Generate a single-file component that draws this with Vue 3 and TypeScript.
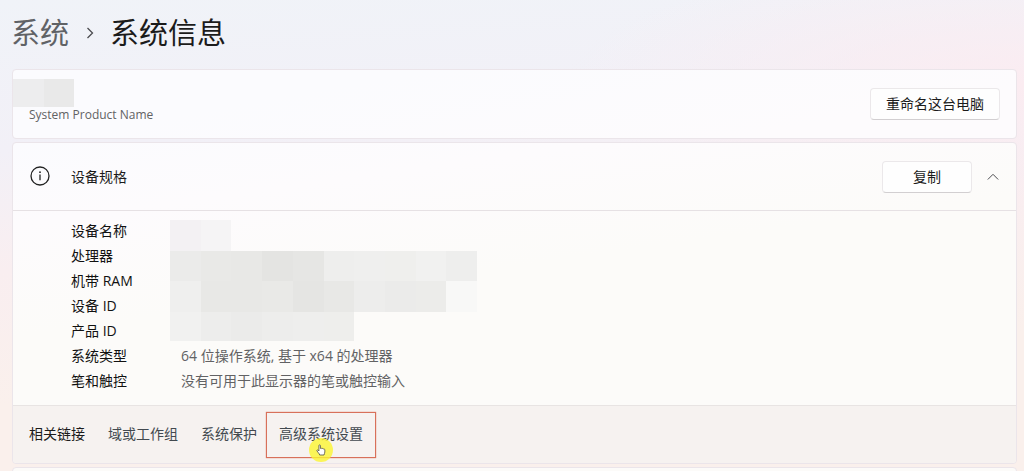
<script setup lang="ts">
interface Spec {
  label: string
  value: string
}

interface Link {
  text: string
  active: boolean
}

const specs: Spec[] = [
  { label: '设备名称', value: '' },
  { label: '处理器', value: '' },
  { label: '机带 RAM', value: '' },
  { label: '设备 ID', value: '' },
  { label: '产品 ID', value: '' },
  { label: '系统类型', value: '64 位操作系统, 基于 x64 的处理器' },
  { label: '笔和触控', value: '没有可用于此显示器的笔或触控输入' },
]

const links: Link[] = [
  { text: '域或工作组', active: false },
  { text: '系统保护', active: false },
  { text: '高级系统设置', active: true },
]

// Shades of the blocks that hide the private values, row by row
const mosaic: string[][] = [
  ['#f3f1f3', '#f5f4f5', '', '', '', '', '', '', '', ''],
  ['#ebebea', '#e9e9e7', '#e8e8e6', '#e4e4e2', '#e6e6e4', '#eeeeed', '#efefee', '#efefed', '#f1f1f0', '#eeeeed'],
  ['#efefee', '#e8e8e6', '#e8e8e6', '#e9e9e7', '#e5e5e3', '#e8e8e6', '#ededec', '#ebebea', '#ececea', '#f8f8f7'],
  ['#f1f1f0', '#ededec', '#ebebea', '#ededec', '#eeeeed', '#eeeeec', '', '', '', ''],
]
</script>

<template>
  <main class="page">
    <nav class="crumbs" aria-label="导航路径">
      <a class="crumb" href="#">系统</a>
      <svg class="crumb-arrow" viewBox="0 0 8 12" aria-hidden="true">
        <path d="M1.5 1 L6.5 6 L1.5 11" />
      </svg>
      <h1 class="title">系统信息</h1>
    </nav>

    <section class="card device">
      <div class="device-text">
        <div class="name-mask"><i></i><i></i></div>
        <p class="product">System Product Name</p>
      </div>
      <button class="btn" type="button">重命名这台电脑</button>
    </section>

    <section class="card main">
      <header class="card-head">
        <svg class="info" viewBox="0 0 20 20" aria-hidden="true">
          <circle class="ring" cx="10" cy="9" r="9" />
          <circle class="dot" cx="10" cy="5.2" r="0.9" />
          <path class="stem" d="M10 7.6 V13.2" />
        </svg>
        <h2 class="head-title">设备规格</h2>
        <button class="btn copy" type="button">复制</button>
        <button class="toggle" type="button" aria-label="折叠" aria-expanded="true">
          <svg viewBox="0 0 12 8" aria-hidden="true"><path d="M0.8 6.5 L6 1.3 L11.2 6.5" /></svg>
        </button>
      </header>

      <div class="specs">
        <dl class="spec-list">
          <div v-for="s in specs" :key="s.label" class="spec">
            <dt>{{ s.label }}</dt>
            <dd>{{ s.value }}</dd>
          </div>
        </dl>
        <div class="mosaic" aria-hidden="true">
          <template v-for="(row, r) in mosaic" :key="r">
            <i v-for="(c, i) in row" :key="i" :style="{ background: c || 'transparent' }"></i>
          </template>
        </div>
      </div>

      <footer class="links">
        <span class="links-label">相关链接</span>
        <a v-for="l in links" :key="l.text" href="#" class="link" :class="{ active: l.active }">
          {{ l.text }}
          <span v-if="l.active" class="pointer" aria-hidden="true">
            <svg viewBox="0 0 12 14">
              <path
                d="M3.5 8.2 V1.8 C3.5 .5 5.3 .5 5.3 1.8 V5.2 C5.7 4.6 6.9 4.7 7.1 5.5 C7.6 4.9 8.7 5.1 8.9 5.9 C9.5 5.5 10.6 5.8 10.6 6.9 V9.4 C10.6 10.8 9.8 11.3 9.6 13 H4.4 C4.2 11.3 2.4 10.2 1.2 8.1 C.7 7.1 2 6.4 2.7 7.2 Z"
              />
            </svg>
          </span>
        </a>
      </footer>
    </section>

    <section class="card next"></section>
  </main>
</template>

<style>
body {
  margin: 0;
}
</style>

<style scoped>
.page {
  box-sizing: border-box;
  height: 100vh;
  overflow: hidden;
  display: flex;
  flex-direction: column;
  gap: 3px;
  padding: 0 7px 0 12px;
  background:
    radial-gradient(ellipse 45% 28% at 100% 18%, #fbecf1 0%, rgba(251, 236, 241, 0) 100%),
    linear-gradient(176deg, #f0f3f8 0%, #f2f0f7 28%, #f9eef0 50%, #faf0ec 75%);
  color: #1b1b1b;
  font-family: "Open Sans", "Noto Sans CJK SC", sans-serif;
  font-size: 14px;
  line-height: 25px;
}

.crumbs {
  flex: none;
  display: flex;
  align-items: center;
  height: 66px;
  margin-left: -1px;
}

.crumb,
.title {
  margin: 0;
  font-size: 29px;
  line-height: 40px;
  font-weight: 400;
}

.crumb {
  color: #606266;
  text-decoration: none;
}

.crumb-arrow {
  width: 8px;
  height: 12px;
  margin: 0 16px 0 17px;
}

.crumb-arrow path,
.toggle path {
  fill: none;
  stroke: #4c4c50;
  stroke-width: 1.3;
}

.card {
  flex: none;
  border: 1px solid #ebe5ea;
  border-radius: 4px;
  background: #fcfbf9;
}

.device {
  display: flex;
  align-items: center;
  justify-content: space-between;
  height: 68px;
  padding-right: 16px;
  background: linear-gradient(170deg, #fbfbfe 30%, #fdfbfd 80%);
}

.main {
  background: linear-gradient(172deg, #fbfbfe 0%, #fdfbfd 18%, #fcfbf9 42%);
}

.device-text {
  align-self: flex-start;
  padding-top: 9px;
}

.name-mask {
  display: flex;
  width: 61px;
  height: 28px;
}

.name-mask i {
  flex: 1;
  background: #ededee;
}

.name-mask i + i {
  background: #e9e9e9;
}

.product {
  margin: 0 0 0 16px;
  color: #626264;
  font-size: 12px;
  line-height: 16px;
}

.btn {
  box-sizing: border-box;
  height: 32px;
  padding: 0 15px;
  border: 1px solid #ebe8ea;
  border-bottom-color: #d2cfd1;
  border-radius: 4px;
  background: #fefefe;
  color: #1b1b1b;
  font: inherit;
  line-height: 28px;
}

.card-head {
  display: flex;
  align-items: center;
  height: 67px;
  padding: 0 17px;
  border-bottom: 1px solid #e6e1e4;
}

.info {
  width: 20px;
  height: 20px;
  overflow: visible;
}

.info .ring,
.info .stem {
  fill: none;
  stroke: #222;
  stroke-width: 1.3;
}

.info .dot {
  fill: #222;
}

.head-title {
  flex: 1;
  margin: 0 0 0 21px;
  font-size: 14px;
  font-weight: 400;
}

.copy {
  width: 90px;
}

.toggle {
  display: flex;
  margin-left: 15px;
  padding: 0;
  border: 0;
  background: none;
}

.toggle svg {
  width: 12px;
  height: 8px;
}

.toggle path {
  stroke-width: 1;
}

.specs {
  position: relative;
  padding: 7px 0 12px 58px;
}

.spec-list {
  margin: 0;
}

.spec {
  display: grid;
  grid-template-columns: 110px 1fr;
  min-height: 25px;
}

.spec dt {
  color: #111;
}

.spec dd {
  margin: 0;
  color: #626264;
}

.mosaic {
  position: absolute;
  top: 9px;
  left: 157px;
  display: grid;
  grid-template-columns: repeat(10, 1fr);
  grid-template-rows: 31px 30px 31px 29px;
  width: 307px;
}

.links {
  display: flex;
  align-items: center;
  gap: 23px;
  height: 57px;
  padding-left: 16px;
  border-top: 1px solid #e8e4e3;
  border-radius: 0 0 4px 4px;
  background: #f6f2f0;
}

.links-label,
.link {
  padding-bottom: 3px;
}

.link {
  color: #42494f;
  text-decoration: none;
}

.link.active {
  position: relative;
  box-sizing: border-box;
  height: 46px;
  margin-left: -14px;
  padding: 0 12px;
  border: 1px solid #d8705a;
  box-shadow: 0 0 1px #d8705a;
  line-height: 41px;
}

.pointer {
  position: absolute;
  left: 42px;
  bottom: -5px;
  display: flex;
  align-items: center;
  justify-content: center;
  width: 24px;
  height: 24px;
  border-radius: 50%;
  background: rgba(252, 245, 50, 0.8);
}

.pointer svg {
  width: 10px;
  height: 12px;
}

.pointer path {
  fill: #fff;
  stroke: #55554c;
  stroke-width: 1;
}

.next {
  height: 60px;
}
</style>
